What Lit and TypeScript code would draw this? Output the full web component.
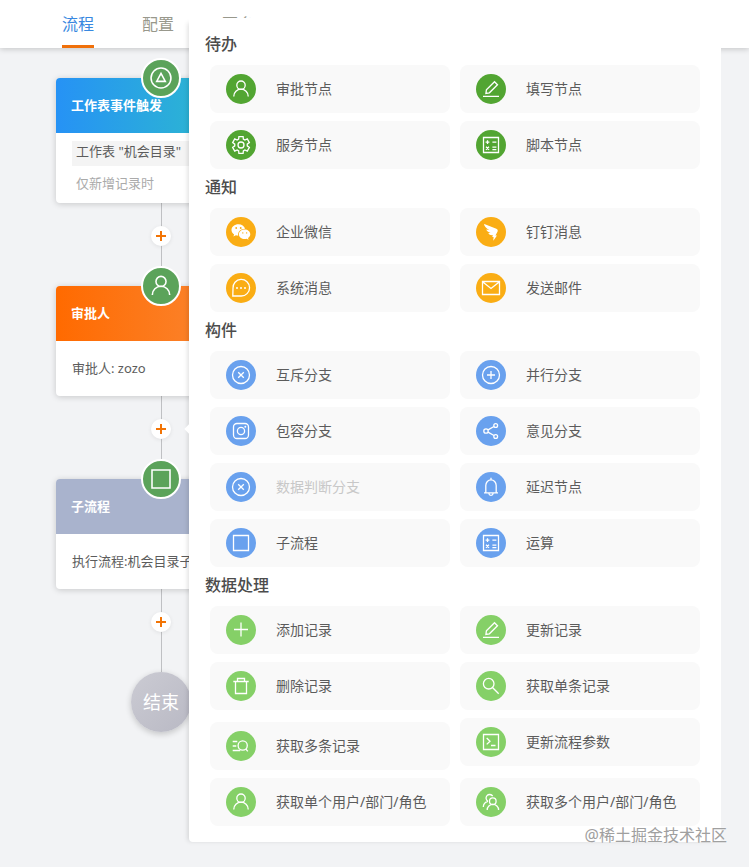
import { LitElement, html, svg, css, nothing } from "lit";
import type { SVGTemplateResult } from "lit";
import { customElement, property } from "lit/decorators.js";
import { classMap } from "lit/directives/class-map.js";

// Outline of a six-toothed gear centred in the 30x30 icon box.
const gearPath = (() => {
  const at = (r: number, deg: number) => {
    const a = (deg * Math.PI) / 180;
    return `${(15 + r * Math.cos(a)).toFixed(2)} ${(15 + r * Math.sin(a)).toFixed(2)}`;
  };
  const points: string[] = [];
  for (let k = 0; k < 6; k++) {
    const a = 60 * k - 90;
    points.push(at(6.3, a - 22), at(8.7, a - 14), at(8.7, a + 14), at(6.3, a + 22));
  }
  return `M${points.join("L")}Z`;
})();

const ICONS: Record<string, SVGTemplateResult> = {
  person: svg`<circle cx="15" cy="11.2" r="4.2"/><path d="M7.8 22.6v-.4a7.2 7 0 0 1 14.4 0v.4"/>`,
  pencil: svg`<path d="M7 22.4h16M9.9 19.5l.5-3.7 8.1-8.1 3 3-8.1 8.1z"/>`,
  gear: svg`<path d=${gearPath}/><circle cx="15" cy="15" r="3"/>`,
  calc: svg`<path d="M7.5 7.5h15v15h-15zM9.6 12.2h3.8M11.5 10.3v3.8M16.4 12.2h4M10 16.8l3 3M13 16.8l-3 3M16.4 17.2h4M16.4 19.6h4"/>`,
  wechat: svg`<path class="solid" d="M12.5 7.3c-4 0-7 2.500-7 5.700 0 1.900 1 3.400 2.600 4.500l-.7 2.100 2.500-1.300c.8.200 1.500.400 2.300.400-.8-4 2.600-7 6.900-6.900-.7-2.700-3.500-4.500-6.600-4.500z"/><path class="solid" d="M18.700 12.500c-3.300 0-5.800 2.100-5.800 4.800s2.600 4.800 5.800 4.800c.7 0 1.300-.1 1.900-.3l2 1-.6-1.800c1.500-.9 2.300-2.200 2.300-3.700 0-2.700-2.500-4.800-5.600-4.800z"/><g class="eye"><circle cx="10.200" cy="11" r=".9"/><circle cx="14.700" cy="11" r=".9"/><circle cx="16.800" cy="15.900" r=".7"/><circle cx="20.600" cy="15.900" r=".7"/></g>`,
  ding: svg`<path class="solid" d="M7.700 6.800l12.600 5c1.200.5 1.700 1.400 1.300 2.600l-2.100 4h1.500l-3.700 5.400.3-3.900h-1.400l.8-1.700c-2.300.3-3.800-.4-4.700-2.100l2.300-.2c-2.300-.6-3.900-1.700-4.400-3.300l3.100.3c-3-1.400-5-3.300-5.300-6.100z"/>`,
  message: svg`<path d="M6.800 23l.2-7.600a8.300 8.300 0 1 1 8 7.600z"/><g class="dots"><circle cx="11" cy="15" r="1"/><circle cx="15" cy="15" r="1"/><circle cx="19" cy="15" r="1"/></g>`,
  mail: svg`<path d="M6.500 8.500h17v13h-17zM6.500 8.800l8.500 6.700 8.500-6.700"/>`,
  xcircle: svg`<circle cx="15" cy="15" r="8.500"/><path d="M12.200 12.200l5.600 5.600M17.800 12.200l-5.600 5.600"/>`,
  pluscircle: svg`<circle cx="15" cy="15" r="8.500"/><path d="M11 15h8M15 11v8"/>`,
  camera: svg`<rect x="7.500" y="7.500" width="15" height="15" rx="3.500"/><circle cx="15" cy="15" r="3.600"/><circle class="solid" cx="19.300" cy="10.700" r="1"/>`,
  share: svg`<circle cx="10" cy="15" r="2.200"/><circle cx="19.700" cy="9.500" r="1.900"/><circle cx="19.700" cy="20.500" r="1.900"/><path d="M12 13.900l6-3.400M12 16.100l6 3.400"/>`,
  bell: svg`<path d="M15 5.800v2M9.800 20.500v-7a5.200 5.700 0 0 1 10.400 0v7M8 20.800h14M13 21.200v.6a2 1.500 0 0 0 4 0v-.6"/>`,
  square: svg`<path d="M7.500 7.500h15v15h-15z"/>`,
  plus: svg`<path d="M8 14.500h14M15 7.500v14"/>`,
  trash: svg`<path d="M7.300 10.500h15.400M11.500 10.500v-3h7v3M9.500 10.500v12h11v-12"/>`,
  search: svg`<circle cx="12.700" cy="12.700" r="5.300"/><path d="M16.500 16.500l6.200 6.200"/>`,
  listsearch: svg`<path d="M6.700 10.500h4.600M6.700 15h3.600M6.700 19.500h7.500M19.800 18l2 2.400"/><circle cx="16.700" cy="14.500" r="4.600"/>`,
  terminal: svg`<path d="M7.500 7.500h15v15h-15zM10.700 11l3.300 3.200-3.300 3.200M15 18.500h4.500"/>`,
  people: svg`<circle cx="16.800" cy="14.200" r="3.300"/><path d="M11.200 23a5.700 5.600 0 0 1 11.400 0M12 14.300a3.600 3.600 0 1 1 4.700-5.100M7.300 20a6 6 0 0 1 4.700-5.700"/>`,
  trigger: svg`<circle cx="15" cy="15" r="8.300"/><path d="M15 11.200l3.600 6.600h-7.200z"/>`,
};

@customElement("node-icon")
export class NodeIcon extends LitElement {
  @property() name = "";

  static styles = css`
    :host { display: block; }
    .glyph {
      display: block;
      width: 100%;
      height: 100%;
      fill: none;
      stroke: #fff;
      stroke-width: 1.3;
    }
    .solid { fill: #fff; stroke: none; }
    .dots { fill: #fff; stroke: none; }
    .eye { fill: #faad14; stroke: none; }
  `;

  render() {
    return html`<svg class="glyph" viewBox="0 0 30 30" aria-hidden="true">${ICONS[this.name]}</svg>`;
  }
}

type Tone = "green" | "amber" | "blue" | "lime";
interface Item { icon: string; label: string; disabled?: boolean; low?: boolean; }
interface Group { title: string; tone: Tone; items: Item[]; }

const GROUPS: Group[] = [
  {
    title: "待办", tone: "green",
    items: [
      { icon: "person", label: "审批节点" },
      { icon: "pencil", label: "填写节点" },
      { icon: "gear", label: "服务节点" },
      { icon: "calc", label: "脚本节点" },
    ],
  },
  {
    title: "通知", tone: "amber",
    items: [
      { icon: "wechat", label: "企业微信" },
      { icon: "ding", label: "钉钉消息" },
      { icon: "message", label: "系统消息" },
      { icon: "mail", label: "发送邮件" },
    ],
  },
  {
    title: "构件", tone: "blue",
    items: [
      { icon: "xcircle", label: "互斥分支" },
      { icon: "pluscircle", label: "并行分支" },
      { icon: "camera", label: "包容分支" },
      { icon: "share", label: "意见分支" },
      { icon: "xcircle", label: "数据判断分支", disabled: true },
      { icon: "bell", label: "延迟节点" },
      { icon: "square", label: "子流程" },
      { icon: "calc", label: "运算" },
    ],
  },
  {
    title: "数据处理", tone: "lime",
    items: [
      { icon: "plus", label: "添加记录" },
      { icon: "pencil", label: "更新记录" },
      { icon: "trash", label: "删除记录" },
      { icon: "search", label: "获取单条记录" },
      { icon: "listsearch", label: "获取多条记录", low: true },
      { icon: "terminal", label: "更新流程参数" },
      { icon: "person", label: "获取单个用户/部门/角色" },
      { icon: "people", label: "获取多个用户/部门/角色" },
    ],
  },
];

@customElement("node-picker")
export class NodePicker extends LitElement {
  static styles = css`
    :host {
      display: block;
      box-sizing: border-box;
      padding: 8px 21px 16px;
      background: #fff;
      border-radius: 0 0 4px 4px;
      box-shadow: -4px 2px 5px -3px rgba(0, 0, 0, 0.14);
    }
    .title {
      margin: 0 -5px 3px;
      font-size: 16px;
      line-height: 36px;
      font-weight: 500;
      color: #4c4c4c;
    }
    .grid {
      display: grid;
      grid-template-columns: 1fr 1fr;
      gap: 8px 10px;
    }
    .item {
      display: flex;
      align-items: center;
      gap: 20px;
      height: 48px;
      padding: 0 16px;
      border: 0;
      border-radius: 8px;
      background: #f9f9f9;
      color: #5c5c5c;
      font: inherit;
      font-size: 14px;
      line-height: 20px;
      text-align: left;
      white-space: nowrap;
      cursor: pointer;
    }
    .item:disabled { color: #c8c8c8; cursor: default; }
    .low { margin-top: 4px; }
    .disc {
      flex: none;
      width: 30px;
      height: 30px;
      border-radius: 50%;
    }
    .green { background: #52a532; }
    .amber { background: #faad14; }
    .blue { background: #69a1ee; }
    .lime { background: #85d067; }
  `;

  render() {
    return GROUPS.map(
      (group) => html`
        <section>
          <h2 class="title">${group.title}</h2>
          <div class="grid">
            ${group.items.map(
              (item) => html`
                <button
                  class=${classMap({ item: true, low: !!item.low })}
                  type="button"
                  ?disabled=${item.disabled}
                >
                  <node-icon class="disc ${group.tone}" name=${item.icon}></node-icon>
                  <span>${item.label}</span>
                </button>
              `
            )}
          </div>
        </section>
      `
    );
  }
}

interface Step { tone: string; icon: string; title: string; field?: string; text: string; }

const STEPS: Step[] = [
  { tone: "start", icon: "trigger", title: "工作表事件触发", field: '工作表 "机会目录"', text: "仅新增记录时" },
  { tone: "approve", icon: "person", title: "审批人", text: "审批人: zozo" },
  { tone: "sub", icon: "square", title: "子流程", text: "执行流程:机会目录子流程" },
];

@customElement("app-root")
export class AppRoot extends LitElement {
  static styles = css`
    :host {
      position: relative;
      display: flex;
      flex-direction: column;
      box-sizing: border-box;
      min-height: 100vh;
      background: #f2f3f5;
      font-family: "Noto Sans", "Noto Sans CJK SC", sans-serif;
      overflow: hidden;
    }
    .tabs {
      display: flex;
      gap: 48px;
      padding: 0 62px;
      background: #fff;
      box-shadow: 0 1px 6px rgba(0, 0, 0, 0.2);
    }
    .tab {
      box-sizing: border-box;
      height: 48px;
      border-bottom: 3px solid transparent;
      font-size: 16px;
      line-height: 49px;
      color: #98988c;
      text-decoration: none;
    }
    .current { color: #3888e0; border-color: #f0700a; }
    .flow {
      display: flex;
      flex-direction: column;
      align-items: center;
      width: 210px;
      padding: 30px 56px;
    }
    .step {
      position: relative;
      width: 100%;
      border-radius: 4px;
      background: #fff;
      box-shadow: 0 1px 6px rgba(0, 0, 0, 0.18);
    }
    .badge {
      position: absolute;
      top: -20px;
      left: calc(50% - 20px);
      box-sizing: border-box;
      width: 40px;
      height: 40px;
      border: 2px solid #fff;
      border-radius: 50%;
      background: #5ba35a;
    }
    .head {
      margin: 0;
      padding: 0 15px;
      border-radius: 4px 4px 0 0;
      color: #fff;
      font-size: 13px;
      line-height: 55px;
      font-weight: 700;
    }
    .start { background: linear-gradient(90deg, #2692f5, #2fc4c4); }
    .approve { background: linear-gradient(90deg, #ff6a00, #fa8c3c); }
    .sub { background: #a9b3cd; }
    .body {
      padding: 8px 16px;
      font-size: 13px;
      color: #5c5c5c;
      white-space: nowrap;
    }
    .field {
      padding: 0 4px 4px;
      background: #f4f4f4;
      line-height: 21px;
      margin-bottom: 5px;
    }
    .hint { padding: 0 4px; line-height: 24px; color: #aaa; }
    .text { line-height: 39px; }
    .link {
      display: flex;
      justify-content: center;
      box-sizing: border-box;
      width: 100%;
      height: 83px;
      padding-top: 23px;
      background: linear-gradient(#bfc0c3, #bfc0c3) center / 1px 100% no-repeat;
    }
    .add {
      width: 20px;
      height: 20px;
      padding: 0;
      border: 0;
      border-radius: 50%;
      background: #fff;
      box-shadow: 0 1px 4px rgba(0, 0, 0, 0.08);
      cursor: pointer;
    }
    .cross { display: block; width: 20px; height: 20px; stroke: #f27405; stroke-width: 2; }
    .end {
      width: 60px;
      height: 60px;
      border-radius: 50%;
      background: linear-gradient(135deg, #cbcbd3, #b9b9c4);
      box-shadow: 0 2px 6px rgba(0, 0, 0, 0.2);
      color: #fff;
      font-size: 18px;
      line-height: 60px;
      text-align: center;
    }
    /* The picker floats over the canvas, its arrow pointing at the second add button. */
    .picker { position: absolute; top: 18px; left: 189px; right: 28px; }
    .arrow {
      position: absolute;
      top: 425px;
      left: 186px;
      width: 8px;
      height: 8px;
      background: #fff;
      transform: rotate(45deg);
    }
    .mark {
      position: absolute;
      top: 824px;
      right: 22px;
      font-size: 16px;
      line-height: 22px;
      color: #a0a0a0;
      text-shadow: 0 0 2px #fff;
    }
  `;

  render() {
    return html`
      <nav class="tabs">
        <a class="tab current" href="#flow" aria-current="page">流程</a>
        <a class="tab" href="#config">配置</a>
        <a class="tab" href="#more">更多</a>
      </nav>
      <main class="flow">
        ${STEPS.map(
          (step) => html`
            <article class="step">
              <h3 class="head ${step.tone}">${step.title}</h3>
              <div class="body">
                ${step.field
                  ? html`<div class="field">${step.field}</div>`
                  : nothing}
                <div class=${step.field ? "hint" : "text"}>${step.text}</div>
              </div>
              <node-icon class="badge" name=${step.icon}></node-icon>
            </article>
            <div class="link">
              <button class="add" type="button" aria-label="添加节点">
                <svg class="cross" viewBox="0 0 20 20"><path d="M5 10h10M10 5v10" /></svg>
              </button>
            </div>
          `
        )}
        <div class="end">结束</div>
      </main>
      <node-picker class="picker"></node-picker>
      <div class="arrow"></div>
      <div class="mark">@稀土掘金技术社区</div>
    `;
  }
}
